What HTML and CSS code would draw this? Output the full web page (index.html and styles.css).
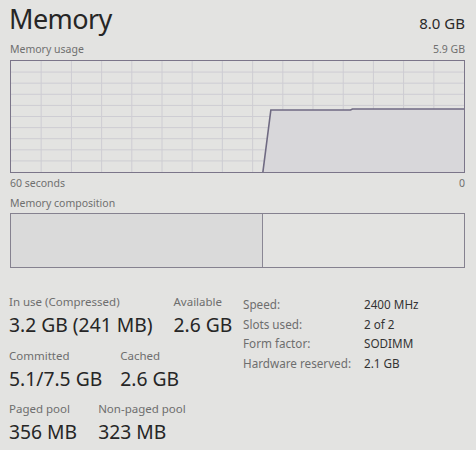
FILE: index.html
```html
<!DOCTYPE html>
<html>
<head>
<meta charset="utf-8">
<link rel="stylesheet" href="styles.css">
</head>
<body>
<div class="panel">
  <div class="header">
    <div class="title">Memory</div>
    <div class="total">8.0 GB</div>
  </div>
  <div class="caption-row top">
    <span>Memory usage</span>
    <span>5.9 GB</span>
  </div>
  <div class="chart">
    <svg class="chart-svg" viewBox="0 0 455 111" preserveAspectRatio="none">
      <g class="grid">
        <line x1="30.3" y1="0" x2="30.3" y2="111"/>
        <line x1="60.7" y1="0" x2="60.7" y2="111"/>
        <line x1="91" y1="0" x2="91" y2="111"/>
        <line x1="121.3" y1="0" x2="121.3" y2="111"/>
        <line x1="151.7" y1="0" x2="151.7" y2="111"/>
        <line x1="182" y1="0" x2="182" y2="111"/>
        <line x1="212.3" y1="0" x2="212.3" y2="111"/>
        <line x1="242.7" y1="0" x2="242.7" y2="111"/>
        <line x1="273" y1="0" x2="273" y2="111"/>
        <line x1="303.3" y1="0" x2="303.3" y2="111"/>
        <line x1="333.7" y1="0" x2="333.7" y2="111"/>
        <line x1="364" y1="0" x2="364" y2="111"/>
        <line x1="394.3" y1="0" x2="394.3" y2="111"/>
        <line x1="424.7" y1="0" x2="424.7" y2="111"/>
        <line x1="0" y1="11.1" x2="455" y2="11.1"/>
        <line x1="0" y1="22.2" x2="455" y2="22.2"/>
        <line x1="0" y1="33.3" x2="455" y2="33.3"/>
        <line x1="0" y1="44.4" x2="455" y2="44.4"/>
        <line x1="0" y1="55.5" x2="455" y2="55.5"/>
        <line x1="0" y1="66.6" x2="455" y2="66.6"/>
        <line x1="0" y1="77.7" x2="455" y2="77.7"/>
        <line x1="0" y1="88.8" x2="455" y2="88.8"/>
        <line x1="0" y1="99.9" x2="455" y2="99.9"/>
      </g>
      <polygon class="fill" points="253,111 261,49 341,49 343,48 455,48 455,111"/>
      <polyline class="line" points="253,111 261,49 341,49 343,48 455,48"/>
    </svg>
  </div>
  <div class="caption-row">
    <span>60 seconds</span>
    <span>0</span>
  </div>
  <div class="caption-row comp-label">
    <span>Memory composition</span>
  </div>
  <div class="composition">
    <div class="comp-inuse"></div>
    <div class="comp-free"></div>
  </div>

  <div class="stats">
    <div class="stats-left">
      <div class="stat-row">
        <div class="stat">
          <div class="stat-label">In use (Compressed)</div>
          <div class="stat-value">3.2 GB (241 MB)</div>
        </div>
        <div class="stat">
          <div class="stat-label">Available</div>
          <div class="stat-value">2.6 GB</div>
        </div>
      </div>
      <div class="stat-row tight">
        <div class="stat">
          <div class="stat-label">Committed</div>
          <div class="stat-value">5.1/7.5 GB</div>
        </div>
        <div class="stat">
          <div class="stat-label">Cached</div>
          <div class="stat-value">2.6 GB</div>
        </div>
      </div>
      <div class="stat-row">
        <div class="stat">
          <div class="stat-label">Paged pool</div>
          <div class="stat-value">356 MB</div>
        </div>
        <div class="stat">
          <div class="stat-label">Non-paged pool</div>
          <div class="stat-value">323 MB</div>
        </div>
      </div>
    </div>
    <div class="stats-right">
      <div class="kv"><span class="k">Speed:</span><span class="v">2400 MHz</span></div>
      <div class="kv"><span class="k">Slots used:</span><span class="v">2 of 2</span></div>
      <div class="kv"><span class="k">Form factor:</span><span class="v">SODIMM</span></div>
      <div class="kv"><span class="k">Hardware reserved:</span><span class="v">2.1 GB</span></div>
    </div>
  </div>
</div>
</body>
</html>
```

FILE: styles.css
```css
html, body {
  margin: 0;
  padding: 0;
}
body {
  width: 476px;
  height: 450px;
  overflow: hidden;
  background: #e3e3e1;
  font-family: "Noto Sans", "Open Sans", sans-serif;
  color: #2a2a2a;
}
.panel {
  padding: 0 11px 0 9px;
}
.header {
  display: flex;
  justify-content: space-between;
  align-items: baseline;
  height: 38px;
}
.title {
  font-size: 27px;
  font-weight: 400;
  line-height: 38px;
  letter-spacing: -0.6px;
  color: #262626;
}
.total {
  font-size: 15px;
  line-height: 38px;
  color: #2a2a2a;
}
.caption-row {
  display: flex;
  justify-content: space-between;
  font-size: 10.5px;
  line-height: 20px;
  color: #6f6f6f;
  padding-left: 1px;
}
.caption-row.top {
  line-height: 22px;
  height: 22px;
}
.chart {
  margin-left: 1px;
  height: 111px;
  border: 1px solid #7b7589;
  box-sizing: content-box;
  width: 453px;
}
.chart-svg {
  display: block;
  width: 453px;
  height: 111px;
}
.grid line {
  stroke: #cecdd3;
  stroke-width: 1;
}
.fill {
  fill: #d8d7da;
}
.line {
  fill: none;
  stroke: #6f6a82;
  stroke-width: 1.6;
}
.comp-label {
  height: 20px;
}
.composition {
  margin-left: 1px;
  width: 453px;
  height: 53px;
  border: 1px solid #85818f;
  display: flex;
}
.comp-inuse {
  width: 251px;
  background: #dadada;
  border-right: 1.5px solid #8a8794;
}
.comp-free {
  flex: 1;
}
.stats {
  display: flex;
  margin-top: 26px;
}
.stats-left {
  width: 234px;
  display: flex;
  flex-direction: column;
}
.stat-row {
  display: flex;
  gap: 21px;
  height: 53.5px;
}
.stat-row.tight {
  gap: 18px;
}
.stat-label {
  font-size: 11.5px;
  line-height: 16px;
  color: #6e6e6e;
}
.stat-value {
  font-size: 19.3px;
  line-height: 30px;
  color: #262626;
}
.stats-right {
  display: flex;
  flex-direction: column;
  padding-top: 1px;
}
.kv {
  display: flex;
  font-size: 11.7px;
  line-height: 19.7px;
}
.k {
  width: 121px;
  color: #6e6e6e;
}
.v {
  color: #333;
}
```
